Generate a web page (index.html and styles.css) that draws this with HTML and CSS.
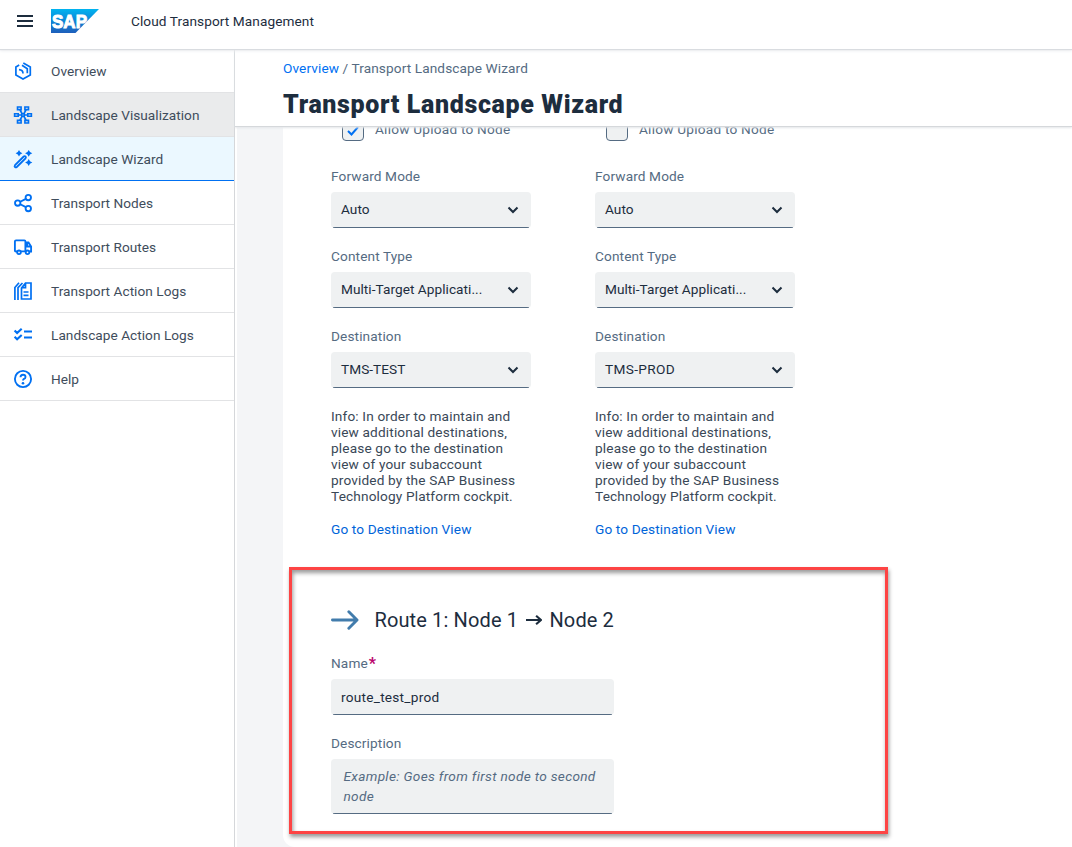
FILE: index.html
```html
<!DOCTYPE html>
<html lang="en">
<head>
<meta charset="utf-8">
<title>Cloud Transport Management</title>
<link rel="stylesheet" href="styles.css">
</head>
<body>
<div class="app">
  <header class="shell">
    <svg class="menu" width="16" height="12" viewBox="0 0 16 12"><path d="M0 1h16M0 6h16M0 11h16" stroke="#1d2d3e" stroke-width="2"/></svg>
    <svg class="logo" width="48" height="24" viewBox="0 0 48 24">
      <defs><linearGradient id="sap" x1="0" y1="0" x2="0" y2="1"><stop offset="0" stop-color="#00b4f0"/><stop offset=".4" stop-color="#0b8ddb"/><stop offset="1" stop-color="#1e5fbb"/></linearGradient></defs>
      <path d="M0 0h48L24.500 24H0z" fill="url(#sap)"/>
      <text class="logo-text" x="1" y="18.500" textLength="35" lengthAdjust="spacingAndGlyphs">SAP</text>
    </svg>
    <span class="product">Cloud Transport Management</span>
  </header>
  <div class="body">
    <nav class="side">
      <a class="item"><svg class="ico" viewBox="0 0 18 18"><path d="M5.200 3.100L1.900 5v8L9 17l7.300-4V5L9.300 1M8 3.300l5.300 3.400v4.500M5 7.600q4 .2 4 3.900" stroke-width="1.700"/></svg><span>Overview</span></a>
      <a class="item hover"><svg class="ico" viewBox="0 0 18 18"><path d="M3.500 1h3.600v2.600H3.500zM10.900 1h3.600v2.600h-3.600zM3.500 14.400h3.600V17H3.500zM10.900 14.400h3.600V17h-3.600zM.6 7.700h3.600v2.600H.6zM13.800 7.700h3.600v2.600h-3.600zM7.800 7.800h2.400v2.400H7.800zM4.500 9h3M10.500 9h3M6 4l2.300 4M12 4L9.700 8M6 14l2.300-4M12 14l-2.300-4" stroke-width="1.600"/></svg><span>Landscape Visualization</span></a>
      <a class="item active"><svg class="ico" viewBox="0 0 18 18"><path d="M1 15.200L9.700 6.500q1-.8 1.800 0t0 1.800L2.800 17q-1 .7-1.800 0t0-1.800z"/><path class="solid" d="M5 0l1.200 2.100L8.400 3.200 6.200 4.400 5 6.600 3.800 4.400 1.600 3.200 3.800 2.100zM14.700 0l1.300 2.100 2.300 1.100L16 4.400l-1.300 2.300-1.300-2.300-2.300-1.200 2.300-1.100zM14.700 8.900l1.300 2.300 2.300 1.300-2.300 1.300-1.300 2.300-1.300-2.300-2.300-1.300 2.300-1.300z"/></svg><span>Landscape Wizard</span></a>
      <a class="item"><svg class="ico" viewBox="0 0 18 18"><circle cx="3.700" cy="9" r="2.700"/><circle cx="14.300" cy="3.500" r="2.700"/><circle cx="14.300" cy="14.500" r="2.700"/><path d="M6.200 7.800l5.700-2.900M6.200 10.200l5.700 2.900"/></svg><span>Transport Nodes</span></a>
      <a class="item"><svg class="ico" viewBox="0 0 18 18"><path d="M3.200 13.500H2q-1.100 0-1.100-1V3.400q0-1 1.100-1h8.400q1 0 1 1v10H7M11.500 4.500h3l2.600 4v5h-1.600M13.200 4.500v4H17"/><circle cx="5" cy="14.300" r="1.800"/><circle cx="13.500" cy="14.300" r="1.800"/></svg><span>Transport Routes</span></a>
      <a class="item"><svg class="ico" viewBox="0 0 18 18"><path d="M.9 18V5.500L5 .8M4 18V5.700L8.500 1M7.500 17V6l4-5H17v16zM11.500 1v4.700h-4M9.500 10h5M9.500 13.300h5" stroke-width="1.700"/></svg><span>Transport Action Logs</span></a>
      <a class="item"><svg class="ico" viewBox="0 0 18 18"><path d="M.6 4.500l2.500 2.500 4.600-4.200M.6 10.700l2.500 2.500L7.700 9M10 5.500h8M10 11.500h8" stroke-width="2.100"/></svg><span>Landscape Action Logs</span></a>
      <a class="item"><svg class="ico" viewBox="0 0 18 18"><circle cx="9" cy="9" r="8.100"/><path d="M6.500 7.300q0-2.600 2.500-2.600t2.500 2.200q0 1.300-1.500 2-1 .5-1 1.600"/><circle class="solid" cx="9" cy="13.200" r="1.300"/></svg><span>Help</span></a>
    </nav>
    <main class="main">
      <div class="page-head">
        <div class="crumbs"><a>Overview</a> / Transport Landscape Wizard</div>
        <h1 class="title">Transport Landscape Wizard</h1>
      </div>
      <div class="scroll">
        <div class="card">
          <div class="nodes">
            <section class="node">
              <div class="check-row"><span class="box"><svg width="12" height="10" viewBox="0 0 12 10"><path d="M1 5l3.500 3.500L11 1" fill="none" stroke="#0070f2" stroke-width="2"/></svg></span><span class="check-text">Allow Upload to Node</span></div>
              <div class="field"><label class="label">Forward Mode</label><div class="input select"><span>Auto</span><svg width="12" height="8" viewBox="0 0 12 8"><path d="M1.500 1.500L6 6l4.500-4.500"/></svg></div></div>
              <div class="field"><label class="label">Content Type</label><div class="input select"><span>Multi-Target Applicati...</span><svg width="12" height="8" viewBox="0 0 12 8"><path d="M1.500 1.500L6 6l4.500-4.500"/></svg></div></div>
              <div class="field"><label class="label">Destination</label><div class="input select"><span>TMS-TEST</span><svg width="12" height="8" viewBox="0 0 12 8"><path d="M1.500 1.500L6 6l4.500-4.500"/></svg></div></div>
              <p class="info">Info: In order to maintain and<br>view additional destinations,<br>please go to the destination<br>view of your subaccount<br>provided by the SAP Business<br>Technology Platform cockpit.</p>
              <a class="link">Go to Destination View</a>
            </section>
            <section class="node">
              <div class="check-row"><span class="box"></span><span class="check-text">Allow Upload to Node</span></div>
              <div class="field"><label class="label">Forward Mode</label><div class="input select"><span>Auto</span><svg width="12" height="8" viewBox="0 0 12 8"><path d="M1.500 1.500L6 6l4.500-4.500"/></svg></div></div>
              <div class="field"><label class="label">Content Type</label><div class="input select"><span>Multi-Target Applicati...</span><svg width="12" height="8" viewBox="0 0 12 8"><path d="M1.500 1.500L6 6l4.500-4.500"/></svg></div></div>
              <div class="field"><label class="label">Destination</label><div class="input select"><span class="caps">TMS-PROD</span><svg width="12" height="8" viewBox="0 0 12 8"><path d="M1.500 1.500L6 6l4.500-4.500"/></svg></div></div>
              <p class="info">Info: In order to maintain and<br>view additional destinations,<br>please go to the destination<br>view of your subaccount<br>provided by the SAP Business<br>Technology Platform cockpit.</p>
              <a class="link">Go to Destination View</a>
            </section>
          </div>
          <section class="route">
            <h2 class="route-title"><svg class="big-arrow" width="29" height="20" viewBox="0 0 29 20"><path d="M1.500 10H26M18.500 1.500l8.500 8.500-8.500 8.500" fill="none" stroke="#427cac" stroke-width="3" stroke-linecap="round" stroke-linejoin="round"/></svg><span>Route 1: Node 1</span><svg class="small-arrow" width="17" height="12" viewBox="0 0 17 12"><path d="M0 6h15M10.500 1.500L15.500 6l-5 4.500" fill="none" stroke="#1d2d3e" stroke-width="2.200"/></svg><span>Node 2</span></h2>
            <div class="field"><label class="label">Name<span class="req">*</span></label><div class="input name">route_test_prod</div></div>
            <div class="field"><label class="label">Description</label><div class="input area">Example: Goes from first node to second<br>node</div></div>
          </section>
        </div>
      </div>
    </main>
  </div>
  <div class="highlight"></div>
</div>
</body>
</html>
```
FILE: styles.css
```css
* { box-sizing: border-box; }
body { margin: 0; background: #fff; color: #1d2d3e; font: 13.65px/16px Roboto, "Liberation Sans", sans-serif; letter-spacing: .12px; }
.app { position: relative; display: flex; flex-direction: column; width: 1072px; height: 847px; overflow: hidden; }
.shell { position: relative; z-index: 3; flex: none; display: flex; align-items: center; height: 49px; padding: 0 0 7px 17px; background: #fff; box-shadow: 0 1px 1px #d9dce0, 0 2px 3px #eceef1; }
.logo { margin-left: 18px; }
.logo-text { font: bold 19px "Liberation Sans", sans-serif; letter-spacing: 0; fill: #fff; stroke: #fff; stroke-width: 1; }
.product { margin-left: 32px; padding-bottom: 1px; color: #1d2d3e; letter-spacing: .08px; }
.body { flex: 1; display: flex; min-height: 0; }
.side { flex: none; width: 235px; border-right: 1px solid #d5d7da; }
.item { display: flex; align-items: center; height: 44px; padding-left: 14px; border-bottom: 1px solid #e2e3e5; color: #3f4d5c; }
.item span { margin-left: 19px; letter-spacing: .03px; }
.item.hover { background: #eaebec; }
.item.active { background: #ebf8ff; border-color: #0070f2; }
.ico { width: 18px; height: 18px; overflow: visible; fill: none; stroke: #0070f2; stroke-width: 1.850; }
.ico .solid { fill: #0070f2; stroke: none; }
.main { flex: 1; display: flex; flex-direction: column; min-width: 0; }
.page-head { position: relative; z-index: 2; flex: none; height: 78px; padding: 11px 0 0 48px; background: #fff; border-bottom: 1px solid #d5d8db; box-shadow: 0 1px 2px #e4e6e9; }
.crumbs { color: #556b82; letter-spacing: .1px; }
.crumbs a { color: #0070f2; }
.title { margin: 14px 0 0; font-size: 25px; line-height: 30px; font-weight: 900; letter-spacing: .65px; }
.scroll { flex: 1; min-height: 0; overflow: hidden; margin-left: 2px; padding-left: 46px; background: #f4f5f7; }
.card { height: 728px; margin-top: -8px; padding-left: 48px; background: #fff; border-radius: 0 0 0 12px; }
.nodes { display: flex; gap: 64px; }
.node { width: 200px; }
.check-row { display: flex; gap: 11px; height: 22px; margin: 0 0 27px 11px; align-items: center; color: #556b82; white-space: nowrap; }
.check-text { padding-bottom: 3px; letter-spacing: .22px; }
.box { display: grid; place-items: center; width: 22px; height: 22px; border: 1px solid #556b82; border-radius: 4px; background: #eff1f2; }
.box svg { margin-top: 2px; }
.field { margin-bottom: 20px; }
.label { display: block; height: 16px; margin-bottom: 8px; color: #556b82; }
.input { height: 36px; padding: 10px; border-radius: 4px; background: linear-gradient(#556b82, #556b82) 2px 100% / calc(100% - 4px) 1px no-repeat #eff1f2; }
.select { display: flex; align-items: center; justify-content: space-between; padding: 0 12px 0 10px; letter-spacing: .04px; }
.select span { padding-bottom: 3px; }
.select .caps { letter-spacing: .35px; }
.select svg { fill: none; stroke: #1d2d3e; stroke-width: 2; }
.name { letter-spacing: .25px; }
.info { margin: 0; color: #3a4857; letter-spacing: .15px; white-space: nowrap; }
.link { display: block; margin-top: 17px; color: #0064d9; }
.route { width: 283px; padding-top: 71px; }
.route-title { display: flex; align-items: center; height: 24px; margin: 0 0 23px; font-size: 20px; font-weight: 400; letter-spacing: .13px; white-space: nowrap; }
.big-arrow { margin-right: 15.5px; }
.small-arrow { margin: 0 7px 0 8px; }
.req { margin-left: 1px; color: #ba066c; font-size: 16px; font-weight: bold; line-height: 1; vertical-align: -1px; }
.area { height: 55px; padding: 7px 12.500px; color: #556b82; font-style: italic; line-height: 20px; letter-spacing: .31px; white-space: nowrap; }
.highlight { position: absolute; z-index: 4; left: 289px; top: 567px; width: 599px; height: 267px; border: 3px solid #fd4444; box-shadow: 1px 3px 4px rgba(0,0,0,.4), inset 1px 3px 4px rgba(0,0,0,.4); }
```
